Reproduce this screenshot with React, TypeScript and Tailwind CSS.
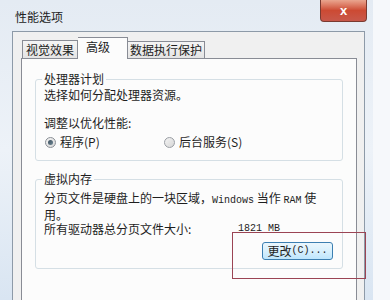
export default function App() {
    return (
        <div className="relative w-[390px] h-[300px] overflow-hidden bg-[#f6f8fb] font-['Noto_Sans_CJK_SC',sans-serif] text-[12px] text-[#1e1e1e]">
            {/* Window frame */}
            <div className="flex flex-col w-[373px] h-[300px] bg-gradient-to-b from-[#e4ebf3] via-[#edf2f8] to-[#d9e5f2]">
                {/* Title bar */}
                <div className="flex h-[31px] shrink-0 items-start justify-between pl-[15px] pr-[6px]">
                    <span className="mt-[9px] leading-[16px] text-[#222]">性能选项</span>
                    <div className="flex h-[22px] w-[47px] items-center justify-center rounded-b-[4px] border border-t-0 border-[#7a3a30] bg-gradient-to-b from-[#e9a58f] via-[#cc4a33] to-[#c8584a]">
                        <span className="text-[13px] font-bold leading-none text-white font-['Liberation_Sans',sans-serif]">x</span>
                    </div>
                </div>

                {/* Body */}
                <div className="ml-[12px] mr-[8px] flex-1 border-l border-t border-r border-[#8d9aa8] bg-[#f0f0f0] pl-[8px] pr-[7px] pt-[5px]">
                    {/* Tabs */}
                    <div className="flex items-end h-[21px] pl-[1px]">
                        <div className="h-[18px] w-[56px] border border-b-0 border-[#898c95] bg-gradient-to-b from-[#f5f5f5] to-[#e4e4e4] text-center leading-[17px]">视觉效果</div>
                        <div className="relative z-10 -mb-px h-[22px] w-[50px] border border-b-0 border-l-0 border-[#898c95] bg-[#fcfcfc] pl-[8px] leading-[18px]">高级</div>
                        <div className="h-[17px] w-[77px] border border-b-0 border-l-0 border-[#898c95] bg-gradient-to-b from-[#f5f5f5] to-[#e4e4e4] text-center leading-[16px]">数据执行保护</div>
                    </div>

                    {/* Panel */}
                    <div className="h-[260px] border border-[#898c95] bg-[#fcfcfc] px-[13px] pt-[13px]">
                        <fieldset className="rounded-[3px] border border-[#d5dfe5] pl-[8px] pr-[9px] pb-[11px]">
                            <legend className="ml-[-2px] px-[2px] leading-[14px]">处理器计划</legend>
                            <p className="mt-[2px] leading-[14px]">选择如何分配处理器资源。</p>
                            <p className="mt-[14px] leading-[14px]">调整以优化性能:</p>
                            <div className="mt-[5px] flex items-center leading-[14px]">
                                <div className="flex w-[120px] items-center gap-[4px] pl-[1px]">
                                    <div className="flex h-[11px] w-[11px] items-center justify-center rounded-full border border-[#8a8f96] bg-gradient-to-br from-[#f4f4f4] to-[#d8d8d8]">
                                        <div className="h-[5px] w-[5px] rounded-full bg-gradient-to-br from-[#3c4f5e] to-[#6f8794]" />
                                    </div>
                                    <span>程序(P)</span>
                                </div>
                                <div className="flex items-center gap-[4px]">
                                    <div className="h-[11px] w-[11px] rounded-full border border-[#9a9ea4] bg-gradient-to-br from-[#f4f4f4] to-[#d6d6d6]" />
                                    <span>后台服务(S)</span>
                                </div>
                            </div>
                        </fieldset>

                        <fieldset className="mt-[11px] rounded-[3px] border border-[#d5dfe5] pl-[8px] pr-[9px] pb-[8px]">
                            <legend className="ml-[-2px] px-[2px] leading-[14px]">虚拟内存</legend>
                            <div className="mt-[5px] leading-[14px]">
                                <div className="whitespace-nowrap">
                                    分页文件是硬盘上的一块区域，<span className="font-['Liberation_Mono',monospace] text-[10px]">Windows</span> 当作 <span className="font-['Liberation_Mono',monospace] text-[10px]">RAM</span> 使
                                </div>
                                <div>用。</div>
                            </div>
                            <div className="flex items-center leading-[14px]">
                                <span className="w-[194px]">所有驱动器总分页文件大小:</span>
                                <span className="font-['Liberation_Mono',monospace] text-[10px]">1821 MB</span>
                            </div>
                            <div className="mt-[6px] flex justify-end">
                                <div className="flex h-[18px] w-[71px] items-center justify-center rounded-[3px] border border-[#3c7fb1] bg-gradient-to-b from-[#eaf6fd] via-[#d9f0fc] to-[#bee6fd] leading-none">
                                    更改<span className="font-['Liberation_Mono',monospace] text-[10px]">(C)...</span>
                                </div>
                            </div>
                        </fieldset>
                    </div>
                </div>
            </div>

            {/* Red annotation box */}
            <div className="absolute left-[232px] top-[232px] h-[47px] w-[134px] border-[1.5px] border-[#9b4454]" />
        </div>
    );
}
